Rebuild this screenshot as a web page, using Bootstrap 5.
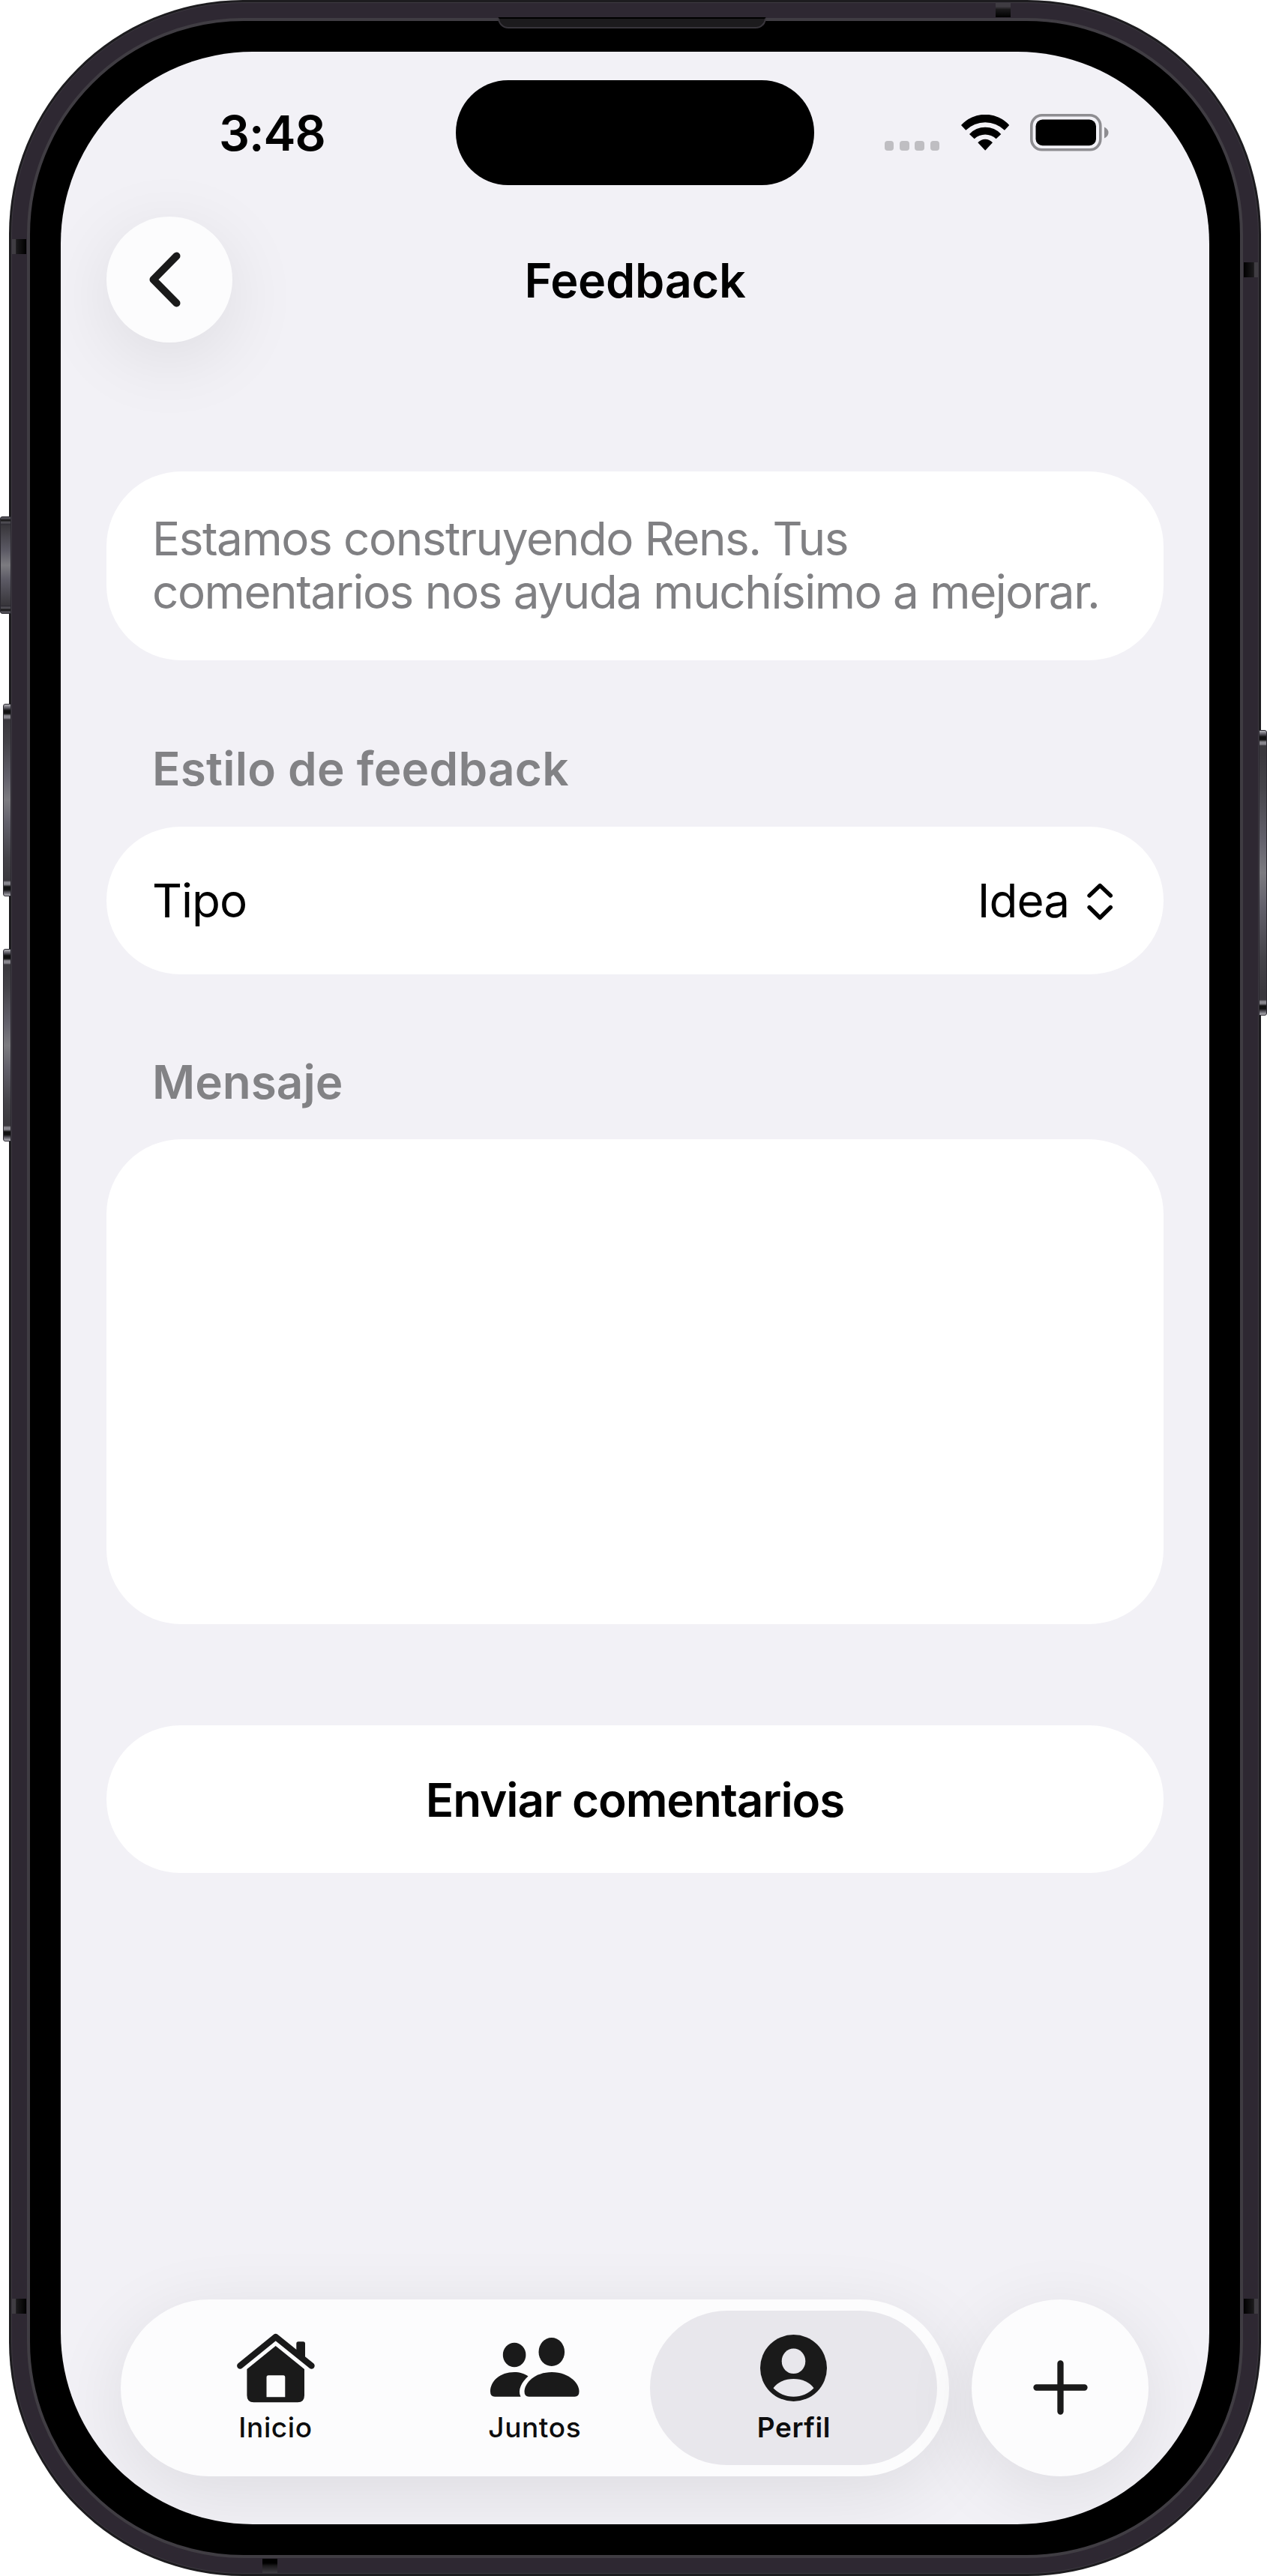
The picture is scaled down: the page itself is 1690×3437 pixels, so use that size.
<!DOCTYPE html>
<html lang="es">
<head>
  <meta charset="UTF-8">
  <meta name="viewport" content="width=device-width, initial-scale=1.0">
  <title>Feedback</title>
  <link href="https://cdn.jsdelivr.net/npm/bootstrap@5.3.0/dist/css/bootstrap.min.css" rel="stylesheet">
  <style>
    body {
      background-color: #fff;
      color: #000;
      font-family: Inter, "Liberation Sans", sans-serif;
      font-size: 62px;
      line-height: 70.5px;
      overflow: hidden;
    }
    svg {
      display: block;
    }
    /* device frame, from the outside in */
    .phone {
      width: 1670px;
      height: 3437px;
      margin-left: 12px;
      padding: 3px;
      border-radius: 312px;
      background-color: #1d1c1f;
    }
    .phone-band {
      height: 100%;
      padding: 20px;
      border-radius: 309px;
      background-color: #2e2832;
      border: 1px solid #3d3941;
    }
    .phone-bezel {
      height: 100%;
      padding: 41px;
      border: 4px solid #403d43;
      border-radius: 289px;
      background-color: #000;
    }
    .phone-screen {
      height: 100%;
      border-radius: 256px;
      background-color: #f2f1f6;
      overflow: hidden;
    }
    .speaker {
      left: 652px;
      top: 23px;
      width: 358px;
      height: 15px;
      background-color: #1c1b1d;
      border: 2px solid #38353b;
      border-top-color: #000;
      border-radius: 0 0 14px 14px;
    }
    .antenna { background: linear-gradient(90deg, #3f3c42 25%, #1b1a1c 30%, #000); }
    .antenna-v { width: 19px; height: 20px; }
    .antenna-h { width: 20px; height: 19px; }
    .antenna-tl { left: 4px; top: 319px; }
    .antenna-bl { left: 4px; top: 3067px; }
    .antenna-tr { right: 4px; top: 350px; transform: scaleX(-1); }
    .antenna-br { right: 4px; top: 3067px; transform: scaleX(-1); }
    .antenna-top { left: 1316px; top: 4px; background: linear-gradient(#3f3c42 25%, #1b1a1c 45%, #000); }
    .antenna-bottom { left: 338px; bottom: 4px; background: linear-gradient(#000 30%, #1b1a1c 50%, #3f3c42); }
    .side-key {
      left: -8px;
      width: 11px;
      border: 1px solid #2b2930;
      border-radius: 3px 0 0 3px;
      background:
        linear-gradient(#b5b4ba, #504e56 5px, #111 8px, #111 12px, #88868d 15px, #88868d 18px, transparent 20px) top / 100% 21px no-repeat,
        linear-gradient(0deg, #b5b4ba, #504e56 5px, #111 8px, #111 12px, #88868d 15px, #88868d 18px, transparent 20px) bottom / 100% 21px no-repeat,
        linear-gradient(#3a383d 8%, #454349 20%, #62606b 38%, #7c7b80 50%, #62606b 62%, #454349 80%, #3a383d 92%);
    }
    .key-action {
      left: -12px;
      top: 689px;
      width: 15px;
      height: 130px;
      background:
        linear-gradient(#504e56 2px, #111 4px, #55535a 7px, #2b2930 10px, transparent 11px) top / 100% 12px no-repeat,
        linear-gradient(0deg, #504e56 2px, #111 4px, #55535a 7px, #2b2930 10px, transparent 11px) bottom / 100% 12px no-repeat,
        linear-gradient(#3a383d 10%, #5c5a65 35%, #7c7b80 50%, #5c5a65 65%, #3a383d 90%);
    }
    .key-up { top: 939px; height: 257px; }
    .key-down { top: 1266px; height: 257px; }
    .key-power {
      left: auto;
      right: -8px;
      top: 974px;
      height: 381px;
      border-radius: 0 3px 3px 0;
    }

    /* status bar */
    .status-bar { height: 177px; padding-top: 37.5px; }
    .status-side { width: 527px; height: 140px; }
    .status-time {
      padding-left: 211px;
      padding-top: 3px;
      font-size: 64.5px;
      letter-spacing: -1px;
    }
    .island { width: 478px; height: 140px; border-radius: 70px; background-color: #000; }
    .status-icons { padding-left: 93.5px; }
    .icon-wifi { margin-left: 28.5px; }
    .icon-battery { margin-left: 28px; }
    .signal-dots { gap: 7.7px; margin-top: 36px; }
    .signal-dots span { width: 12.7px; height: 12.7px; border-radius: 4px; background-color: #bfbec2; }

    /* header and form */
    .page-head { height: 168px; margin: 43px 61px 0; }
    .page-head h1 { font-size: 63px; letter-spacing: -.3px; line-height: 70px; padding-top: 1px; }
    .glass {
      background-color: #fcfcfd;
      box-shadow: 0 22px 100px rgba(0, 0, 0, .09);
    }
    .back-btn { width: 168px; height: 168px; padding: 0 0 0 57px; }
    .head-side { width: 168px; }
    .feedback-form { padding: 171.5px 61px 0; }
    .cell {
      border: 0;
      border-radius: 100px;
      background-color: #fff;
      padding: 0 61px;
      color: #000;
    }
    .cell-note { height: 252px; color: #808083; letter-spacing: -1.5px; white-space: nowrap; }
    .cell-row { height: 197px; letter-spacing: -1px; padding-top: 2px; }
    .section-title {
      margin: 0;
      padding-left: 61px;
      font-size: 62px;
      line-height: 70px;
      color: #828285;
    }
    .title-style { padding-top: 110px; height: 222.5px; letter-spacing: .25px; }
    .title-message { padding-top: 109px; height: 219.5px; }
    .message-box { height: 647px; resize: none; display: block; }
    .send-btn { margin-top: 135px; height: 197px; letter-spacing: -1.1px; padding-top: 2px; font-size: 62px; }

    /* bottom bar */
    .bottom-bar { margin: auto 80px 64.5px; gap: 30px; }
    .tab-pill { width: 1105px; height: 236px; padding: 15px; border-radius: 118px; }
    .tab-item {
      width: 383px;
      height: 206px;
      border-radius: 103px;
      padding-top: 30px;
      color: #0d0d0e;
      font-size: 37px;
      line-height: 44px;
      font-weight: 500;
      letter-spacing: .6px;
    }
    .tab-item + .tab-item { margin-left: -37.3px; }
    .tab-item.active { background-color: #e8e7ec; font-weight: 600; }
    .tab-icon { height: 94px; margin-bottom: 10.5px; }
    .icon-people { margin-top: 6.5px; }
    .icon-person { margin-top: 2px; }
    .add-btn { width: 236px; height: 236px; }
  </style>
</head>
<body>
  <div class="phone position-relative">
    <div class="phone-band">
      <div class="phone-bezel">
        <div class="phone-screen d-flex flex-column">

          <div class="status-bar d-flex">
            <div class="status-side status-time d-flex align-items-center fw-semibold">3:48</div>
            <div class="island"></div>
            <div class="status-side status-icons d-flex align-items-center">
              <div class="signal-dots d-flex"><span></span><span></span><span></span><span></span></div>
              <svg class="icon-wifi" width="64.3" height="48" viewBox="0 0 193 144">
                <path d="M0 42A130 130 0 0 1 193 42L174 62A111 111 0 0 0 19 62Z"/>
                <path d="M33 78A86 86 0 0 1 160 78L140 97A62 62 0 0 0 53 97Z"/>
                <path d="M67 112A38 38 0 0 1 126 112L96.5 143Z"/>
              </svg>
              <svg class="icon-battery" width="105" height="50" viewBox="0 0 105 50">
                <rect x="1.8" y="1.8" width="92" height="46" rx="14" fill="none" stroke="#8e8d91" stroke-width="3.6"/>
                <rect x="7.5" y="7.6" width="80.5" height="34.6" rx="9"/>
                <path d="M99 17.5Q104.500 20 104.500 25T99 32.500Z" fill="#8e8d91"/>
              </svg>
            </div>
          </div>

          <header class="page-head d-flex align-items-center justify-content-between">
            <button class="btn back-btn glass rounded-circle border-0" aria-label="Volver">
              <svg width="42" height="74" viewBox="0 0 42 74" fill="none" stroke="#1a1a1a" stroke-width="10" stroke-linecap="round" stroke-linejoin="round">
                <path d="M36.500 5.500L5.500 37L36.500 68.500"/>
              </svg>
            </button>
            <h1 class="fw-semibold m-0">Feedback</h1>
            <div class="head-side"></div>
          </header>

          <main class="feedback-form">
            <div class="cell cell-note d-flex align-items-center">
              <div>Estamos construyendo Rens. Tus<br>comentarios nos ayuda muchísimo a mejorar.</div>
            </div>

            <h2 class="section-title title-style fw-semibold">Estilo de feedback</h2>
            <div class="cell cell-row d-flex align-items-center justify-content-between">
              <span class="cell-label">Tipo</span>
              <span class="cell-value d-flex align-items-center">Idea
                <svg class="ms-4" width="41" height="50" viewBox="0 0 41 50" fill="none" stroke="#000" stroke-width="5.300" stroke-linecap="round" stroke-linejoin="round">
                  <path d="M3 17L17.200 3.500L31.400 17M3 32.500L17.200 46.500L31.400 32.500"/>
                </svg>
              </span>
            </div>

            <h2 class="section-title title-message fw-semibold">Mensaje</h2>
            <textarea class="cell message-box w-100" aria-label="Mensaje"></textarea>

            <button class="btn cell send-btn w-100 fw-semibold">Enviar comentarios</button>
          </main>

          <nav class="bottom-bar d-flex">
            <div class="tab-pill glass d-flex">
              <div class="tab-item d-flex flex-column align-items-center">
                <div class="tab-icon">
                  <svg width="104" height="93" viewBox="0 0 104 93" fill="#1a1a1a">
                    <path d="M79.300 26V14Q79.300 11.300 82 11.300H88.300Q91 11.300 91 14V38L79.300 28Z"/>
                    <path d="M4.300 43.500L51.700 5L99.500 43.500" fill="none" stroke="#1a1a1a" stroke-width="8.400" stroke-linecap="round" stroke-linejoin="round"/>
                    <path fill-rule="evenodd" d="M51.700 17L90 48V83Q90 92.300 81 92.300H22.500Q13.400 92.300 13.400 83V48ZM42 56.300Q39.500 56.300 39.500 59V85.300H64.300V59Q64.300 56.300 62 56.300Z"/>
                  </svg>
                </div>
                <span>Inicio</span>
              </div>
              <div class="tab-item d-flex flex-column align-items-center">
                <div class="tab-icon">
                  <svg class="icon-people" width="119" height="79" viewBox="0 0 119 79" fill="#1a1a1a">
                    <ellipse cx="32.100" cy="23" rx="15.300" ry="16.300"/>
                    <ellipse cx="81.800" cy="19" rx="17.300" ry="19"/>
                    <path d="M6 78.700Q0 78.700 0 72C0 58 13 46 32 46C39 46 46 48 50.500 51.500C42 59 36 70 40.500 78.700Z"/>
                    <path d="M51.500 78.700Q45.500 78.700 45.500 72C45.500 60 60 46 82 46S118.500 60 118.500 72Q118.500 78.700 112.500 78.700Z"/>
                  </svg>
                </div>
                <span>Juntos</span>
              </div>
              <div class="tab-item active d-flex flex-column align-items-center">
                <div class="tab-icon">
                  <svg class="icon-person" width="89" height="89" viewBox="0 0 89 89">
                    <circle cx="44.500" cy="44.500" r="44.500" fill="#1a1a1a"/>
                    <ellipse cx="44.500" cy="35.300" rx="15.800" ry="16.800" fill="#e8e7ec"/>
                    <path d="M17.500 71.300C23 63.500 33 59 44.500 59S66 63.500 71.500 71.300C65 78.500 55 82.700 44.500 82.700S24 78.500 17.500 71.300Z" fill="#e8e7ec"/>
                  </svg>
                </div>
                <span>Perfil</span>
              </div>
            </div>
            <button class="btn add-btn glass rounded-circle border-0 d-flex align-items-center justify-content-center p-0" aria-label="Añadir">
              <svg width="73" height="73" viewBox="0 0 73 73" stroke="#1a1a1a" stroke-width="8.300" stroke-linecap="round">
                <path d="M36.500 4.500V68.500M4.500 36.500H68.500"/>
              </svg>
            </button>
          </nav>

        </div>
      </div>
    </div>

    <!-- hardware details on top of the frame -->
    <div class="speaker position-absolute"></div>
    <div class="antenna antenna-v antenna-tl position-absolute"></div>
    <div class="antenna antenna-v antenna-bl position-absolute"></div>
    <div class="antenna antenna-v antenna-tr position-absolute"></div>
    <div class="antenna antenna-v antenna-br position-absolute"></div>
    <div class="antenna antenna-h antenna-top position-absolute"></div>
    <div class="antenna antenna-h antenna-bottom position-absolute"></div>
    <div class="side-key key-action position-absolute"></div>
    <div class="side-key key-up position-absolute"></div>
    <div class="side-key key-down position-absolute"></div>
    <div class="side-key key-power position-absolute"></div>
  </div>

  <script src="https://cdn.jsdelivr.net/npm/bootstrap@5.3.0/dist/js/bootstrap.bundle.min.js"></script>
</body>
</html>
